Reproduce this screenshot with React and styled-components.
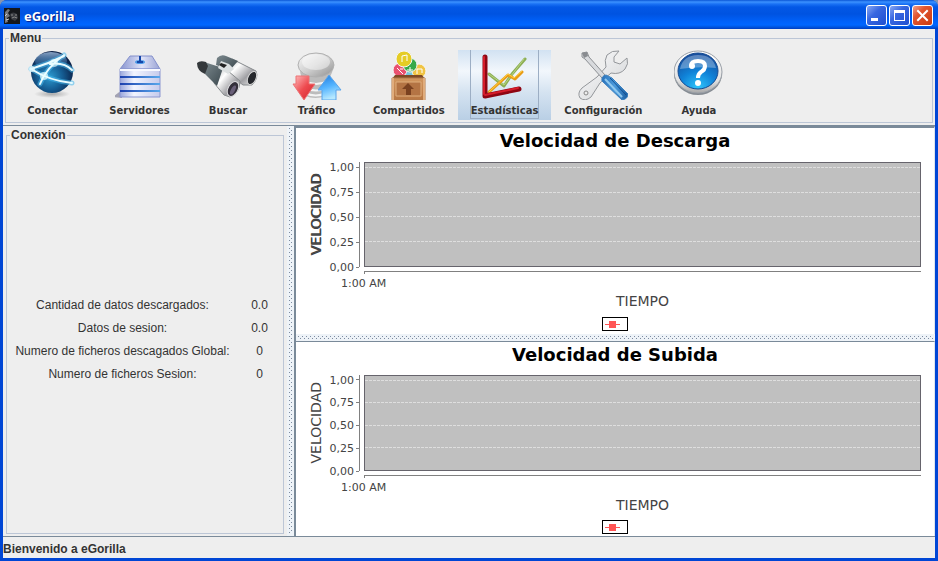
import React from "react";
import styled, { createGlobalStyle, css } from "styled-components";

const GlobalStyle = createGlobalStyle`
  *, *::before, *::after { box-sizing: border-box; }
  html, body { margin: 0; background: #8795b0; }
  body { font-family: "Liberation Sans", Arial, sans-serif; color: #333333; }
`;

const tahoma = `"DejaVu Sans", Tahoma, sans-serif`;

const Window = styled.div`
  display: flex;
  flex-direction: column;
  min-height: 100vh;
  padding: 0 3px 3px;
  background: #0046d5;
  border-radius: 7px 7px 0 0;
  overflow: hidden;
`;

const TitleBar = styled.header`
  display: flex;
  align-items: center;
  gap: 4px;
  height: 29px;
  flex: none;
  margin: 0 -3px;
  padding: 2px 5px 0 4px;
  background: linear-gradient(
    #0a56d6 0, #3c92ff 2px, #1a72f5 4px, #0358e6 7px,
    #0053e1 14px, #0062fb 22px, #0066ff 25px, #0055e0 27px, #003dc0 29px
  );
`;

const WindowTitle = styled.h1`
  flex: 1;
  margin: 0;
  font: bold 13px/18px "Noto Sans", sans-serif;
  color: #ffffff;
  text-shadow: 1px 1px 1px #0a1883;
`;

const WindowButtons = styled.div`
  display: flex;
  gap: 2px;
`;

const WindowButton = styled.button`
  width: 21px;
  height: 21px;
  padding: 0;
  border: 1px solid #ffffff;
  border-radius: 3px;
  background: ${(p) =>
    p.$danger
      ? "linear-gradient(135deg, #f0a08a, #e2552f 35%, #c93a10)"
      : "linear-gradient(135deg, #88a8f4, #3867e0 40%, #1f4fd0)"};
  svg { display: block; }
`;

const Content = styled.div`
  display: flex;
  flex-direction: column;
  flex: 1;
  background: #eeeeee;
`;

const groupTitle = css`
  padding: 0 1px;
  font: bold 12px/14px "Liberation Sans", Arial, sans-serif;
  color: #333333;
`;

const Group = styled.fieldset`
  min-width: 0;
  margin: 0;
  padding: 0;
  border: 1px solid #bcc6d6;
`;

const MenuGroup = styled(Group)`
  margin: 2px;
`;

const GroupTitle = styled.legend`
  margin-left: 3px;
  ${groupTitle}
`;

const ToolBar = styled.nav`
  display: flex;
  padding: 5px 2px 2px 3px;
`;

const ToolButton = styled.button`
  display: flex;
  flex-direction: column;
  align-items: center;
  min-width: 87px;
  height: 70px;
  padding: 0;
  border: 0;
  background: ${(p) =>
    p.$active ? "linear-gradient(#d2e2f2, #f2f7fc 30%, #d5e3f1 60%, #b9cfe5)" : "none"};
  font: bold 10px/14px ${tahoma};
  color: #333333;
`;

const ToolFace = styled.span`
  display: flex;
  flex-direction: column;
  align-items: center;
  gap: 4px;
  height: 69px;
  margin: 0 12px;
  border: solid ${(p) => (p.$active ? "#9caec4" : "transparent")};
  border-width: 0 1px 1px;
  svg { display: block; flex: none; }
`;

const Split = styled.main`
  display: grid;
  grid-template-columns: minmax(284px, 31fr) 7px minmax(0, 70fr);
  flex: 1;
  border-top: 1px solid #7a8a99;
`;

const Divider = styled.div`
  padding: 2px;
  background-color: #eef3f8;
  background-image: conic-gradient(at 1px 1px, transparent 75%, #7d8ba0 0),
    conic-gradient(at 1px 1px, transparent 75%, #7d8ba0 0),
    linear-gradient(#eef3f8, #eef3f8);
  background-size: 4px 4px, 4px 4px, auto;
  background-position: 0 0, 2px 2px, 0 0;
  background-origin: content-box;
  background-clip: content-box, content-box, border-box;
`;

const SidePanel = styled.section`
  display: flex;
  padding: 2px 3px;
`;

const SideGroup = styled(Group)`
  flex: 1;
`;

const Stats = styled.dl`
  display: grid;
  grid-template-columns: 223px 17px;
  grid-auto-rows: 23px;
  column-gap: 17px;
  align-content: center;
  height: 100%;
  margin: 0;
  padding: 4px 4px 0;
  font-size: 12px;
  line-height: 23px;
  white-space: nowrap;
  dt, dd { display: flex; justify-content: center; margin: 0; }
`;

const ChartColumn = styled.div`
  display: grid;
  grid-template-rows: minmax(0, 16fr) 7px minmax(0, 15fr);
  min-width: 0;
  border-left: 2px solid #7a8a99;
  background: #ffffff;
`;

const ChartPanel = styled.section`
  display: flex;
  flex-direction: column;
  min-height: 0;
  border-top: ${(p) => (p.$compact ? 1 : 2)}px solid #7a8a99;
  border-right: 1px solid #dfe6ee;
`;

const ChartTitle = styled.h2`
  margin: 0 0 ${(p) => (p.$compact ? 7 : 8)}px;
  font: bold 18px/26px ${tahoma};
  color: #000000;
  text-align: center;
`;

const ChartGrid = styled.div`
  flex: 1;
  display: grid;
  grid-template-columns: 18px 34px minmax(0, 1fr);
  grid-template-rows: minmax(0, 1fr) 5px 20px 18px;
  min-height: 0;
  padding: 0 13px 0 11px;
  font-family: ${tahoma};
  color: #444444;
`;

const RangeLabel = styled.div`
  align-self: center;
  justify-self: center;
  writing-mode: vertical-rl;
  rotate: 180deg;
  font-size: 14px;
  line-height: 18px;
  text-shadow: ${(p) => (p.$strong ? "1px 0 0 #444444" : "none")};
`;

const Axis = styled.svg`
  display: block;
  contain: size;
  width: 100%;
  height: 100%;
  overflow: visible;
  text { font: 11px ${tahoma}; fill: #444444; text-anchor: end; }
  line { stroke: #808080; shape-rendering: crispEdges; }
`;

const PlotCell = styled.div`
  margin-left: 5px;
  min-height: 0;
  border: 1px solid #66646c;
  background: #c0c0c0;
`;

const Plot = styled(Axis)`
  line { stroke: #dedede; stroke-dasharray: 3 1; }
`;

const DomainLine = styled.div`
  grid-column: 3;
  height: 3px;
  margin: 4px 0 0 5px;
  border-top: 1px solid #808080;
  border-left: 1px solid #808080;
`;

const DomainTick = styled.div`
  grid-column: 2 / 4;
  padding: 5px 0 0 16px;
  font-size: 11px;
  line-height: 14px;
`;

const DomainLabel = styled.div`
  grid-column: 3;
  padding-left: 5px;
  font-size: 14px;
  line-height: 18px;
  text-align: center;
`;

const Legend = styled.div`
  align-self: center;
  width: 26px;
  height: 14px;
  margin: ${(p) => (p.$compact ? "6px 0 2px" : "7px 0 3px")};
  border: 1px solid #000000;
  svg { display: block; }
`;

const StatusBar = styled.footer`
  height: 22px;
  border-top: 1px solid #7a8a99;
  ${groupTitle}
  padding: 5px 0 0;
`;

const icon = { width: 50, height: 50, viewBox: "0 0 50 50", "aria-hidden": true };

const ConnectIcon = () => (
  <svg {...icon}>
    <defs>
      <radialGradient id="globe" cx=".45" cy=".62" r=".6">
        <stop offset="0" stopColor="#2c9ad0" />
        <stop offset=".5" stopColor="#155d93" />
        <stop offset="1" stopColor="#0a1f45" />
      </radialGradient>
      <linearGradient id="globeTop" x2="0" y2="1">
        <stop offset="0" stopColor="#a9c4e4" stopOpacity=".8" />
        <stop offset="1" stopColor="#2a6cb0" stopOpacity="0" />
      </linearGradient>
      <radialGradient id="soft">
        <stop stopColor="#666" stopOpacity=".5" />
        <stop offset="1" stopColor="#666" stopOpacity="0" />
      </radialGradient>
    </defs>
    <ellipse cx="24" cy="44" rx="18" ry="4" fill="url(#soft)" />
    <circle cx="24" cy="22" r="21" fill="url(#globe)" />
    <ellipse cx="23" cy="11" rx="16" ry="9" fill="url(#globeTop)" />
    <g fill="none" strokeLinecap="round">
      <g stroke="#49b9ee" strokeWidth="5" opacity=".55">
        <path d="M3 19Q20 14 36 6M3 19Q22 31 44 33M36 5Q18 18 12 34M22 14Q36 12 44 20" />
      </g>
      <path stroke="#e8fbff" strokeWidth="2" d="M3 19Q20 14 36 6M3 19Q22 31 44 33M36 5Q18 18 12 34M22 14Q36 12 44 20" />
    </g>
    <circle cx="4" cy="19" r="3" fill="#dff8ff" opacity=".8" />
    <circle cx="16" cy="26" r="4" fill="#eaffff" opacity=".7" />
    <circle cx="26" cy="13" r="4" fill="#eaffff" opacity=".6" />
  </svg>
);

const ServersIcon = () => (
  <svg {...icon}>
    <defs>
      <linearGradient id="rack" x2="1" y2="0">
        <stop stopColor="#9aa6dc" />
        <stop offset=".35" stopColor="#f2f4ff" />
        <stop offset="1" stopColor="#c5cbec" />
      </linearGradient>
      <linearGradient id="rackTop" x2="1" y2="0">
        <stop stopColor="#8894d0" />
        <stop offset=".55" stopColor="#dfe3f8" />
        <stop offset="1" stopColor="#9aa3d4" />
      </linearGradient>
      <linearGradient id="rackBand" x2="1" y2="0">
        <stop stopColor="#1c3fae" />
        <stop offset="1" stopColor="#58a8ec" />
      </linearGradient>
    </defs>
    <path d="M-2 47Q3 42 7 41V48Z" fill="#81819a" opacity=".7" />
    <path d="M15 6H37L45 19H5Z" fill="url(#rackTop)" stroke="#8490cc" />
    <path d="M5 19H45V47H5Z" fill="url(#rack)" stroke="#8b96d0" />
    <path d="M5 20H45" stroke="#f8f9ff" strokeWidth="2" />
    <path d="M5 26H45V28H5ZM5 33H45V35H5ZM5 40H45V42H5Z" fill="url(#rackBand)" />
    <ellipse cx="25" cy="12" rx="5" ry="2" fill="#4c9be8" />
    <path d="M25 6V12M22 12H28" stroke="#1646a8" strokeWidth="2" />
  </svg>
);

const SearchIcon = () => (
  <svg {...icon} width="64" viewBox="0 0 64 50">
    <defs>
      <linearGradient id="tube" x2="1" y2=".9">
        <stop stopColor="#a8adb0" />
        <stop offset=".35" stopColor="#ffffff" />
        <stop offset=".7" stopColor="#a0a0a4" />
        <stop offset="1" stopColor="#e8e8e8" />
      </linearGradient>
      <linearGradient id="rubber" x2="1" y2="1">
        <stop stopColor="#7c898e" />
        <stop offset="1" stopColor="#3a474d" />
      </linearGradient>
    </defs>
    <path d="M36 9L60 21Q63 28 56 35L47 35L30 22Z" fill="url(#tube)" stroke="#85898c" />
    <path d="M21 8Q25 4 30 6L42 11L34 20L20 15Z" fill="url(#rubber)" />
    <ellipse cx="56" cy="28" rx="4" ry="7" transform="rotate(25 56 28)" fill="#26282d" stroke="#d8d8d8" />
    <path d="M22 18L32 21L44 31Q44 43 34 47L28 45L18 33Z" fill="url(#tube)" stroke="#888c8e" />
    <path d="M8 12L27 18L21 36L9 24Z" fill="url(#rubber)" />
    <path d="M1 13Q4 10 10 12L12 16L9 24Q1 21 1 13Z" fill="#34383b" />
    <path d="M25 11L33 14L38 19L32 24L22 18Z" fill="#dce0e1" />
    <path d="M25 13L31 15L28 18L23 15Z" fill="#222222" />
    <ellipse cx="37" cy="39" rx="5" ry="8" transform="rotate(28 37 39)" fill="#34303b" stroke="#dedee0" />
    <ellipse cx="37" cy="40" rx="2" ry="5" transform="rotate(28 37 40)" fill="#695f78" />
  </svg>
);

const TrafficIcon = () => (
  <svg {...icon}>
    <defs>
      <linearGradient id="disk" x2="1" y2="1">
        <stop stopColor="#fafafa" />
        <stop offset=".5" stopColor="#cfcfcf" />
        <stop offset="1" stopColor="#8f8f8f" />
      </linearGradient>
      <linearGradient id="redArrow" x2="1" y2="1">
        <stop stopColor="#ffc0c0" />
        <stop offset=".5" stopColor="#ee4b50" />
        <stop offset="1" stopColor="#cf2028" />
      </linearGradient>
      <linearGradient id="blueArrow" x2=".3" y2="1">
        <stop stopColor="#1d78dc" />
        <stop offset=".55" stopColor="#54b4ff" />
        <stop offset="1" stopColor="#b6e8ff" />
      </linearGradient>
    </defs>
    <path d="M8 18Q8 28 13 32V46Q24 50 33 46V32Q40 27 41 18Z" fill="#bcbcbc" />
    <path d="M12 31Q24 37 36 31M13 38Q24 43 35 38M13 43Q24 48 34 43" fill="none" stroke="#f4f4f4" strokeWidth="2" />
    <ellipse cx="24" cy="15" rx="18" ry="12" fill="url(#disk)" stroke="#b0b0b0" />
    <ellipse cx="24" cy="12" rx="14" ry="8" fill="#ffffff" opacity=".45" />
    <path d="M4 26H17V34H23L12 50L1 34H4Z" fill="url(#redArrow)" stroke="#ec7375" />
    <path d="M37 25L49 40H44V50H30V40H26Z" fill="url(#blueArrow)" stroke="#5ba4ea" />
  </svg>
);

const SharedIcon = () => (
  <svg {...icon}>
    <defs>
      <linearGradient id="crate" x2="0" y2="1">
        <stop stopColor="#d2965f" />
        <stop offset="1" stopColor="#b77643" />
      </linearGradient>
    </defs>
    <g stroke="#f6f6f6">
      <circle cx="25" cy="23" r="6" fill="#72c5de" />
      <circle cx="16" cy="20" r="7" fill="#e9526f" />
      <circle cx="35" cy="21" r="7" fill="#f0c444" />
      <circle cx="26" cy="15" r="7" fill="#36a94a" />
      <circle cx="20" cy="9" r="8" fill="#e5cc25" />
    </g>
    <path
      d="M18 12V6L23 5V11M13 18L19 24M16 19H19M26 17V21M23 20H29M33 24V19H38V23"
      fill="none" stroke="#ffffff"
    />
    <path d="M11 25H38L41 29H8Z" fill="#7f4a25" />
    <path d="M8 28H41V50H8Z" fill="url(#crate)" stroke="#b07a4c" />
    <path d="M12 32H37V46H12Z" fill="#b47444" stroke="#dfae7c" />
    <path d="M24 33L30 39H27V45H22V39H18Z" fill="#7a4120" />
    <path d="M9 28V50M40 28V50" stroke="#e0ad7d" strokeWidth="2" />
  </svg>
);

const StatsIcon = () => (
  <svg {...icon}>
    <g fill="none" strokeLinecap="round" strokeLinejoin="round">
      <path d="M9 24L24 36L32 24L45 9" stroke="#8cae55" strokeWidth="3" />
      <path d="M9 24L24 35L44 9" stroke="#b8d580" />
      <path d="M9 42L28 25L35 29L42 22" stroke="#e89b16" strokeWidth="3" />
      <path d="M9 42L28 24L34 28L42 21" stroke="#ffd240" />
      <path d="M5 7V46L39 39" stroke="#8e0613" strokeWidth="5" />
      <path d="M4 7V44M5 45L38 38" stroke="#d51c2b" strokeWidth="2" />
    </g>
  </svg>
);

const SettingsIcon = () => (
  <svg {...icon}>
    <defs>
      <linearGradient id="steel" x2="1" y2="1">
        <stop stopColor="#ffffff" />
        <stop offset="1" stopColor="#cfd1d4" />
      </linearGradient>
      <linearGradient id="handle" x2="1" y2="0">
        <stop stopColor="#2a72bb" />
        <stop offset=".5" stopColor="#4c9bdc" />
        <stop offset="1" stopColor="#185b9e" />
      </linearGradient>
    </defs>
    <path
      d="M41 1Q34 0 29 5Q26 10 28 17L19 27L4 38Q-1 43 2 48Q7 52 13 47L22 33L33 23Q42 25 47 19Q51 14 49 8L42 14L36 12L36 7Z"
      fill="url(#steel)" stroke="#94979b"
    />
    <circle cx="8" cy="43" r="2" fill="#ededed" stroke="#888888" />
    <path d="M4 3L9 2L11 7L27 25L24 28L7 9L4 7Z" fill="#d8dadd" stroke="#8d9094" />
    <path d="M4 3L9 2L10 6L6 8Z" fill="#898c90" />
    <path d="M24 31Q23 26 28 25L34 28L50 44Q50 49 44 50Z" fill="url(#handle)" stroke="#3b7fbd" />
    <path d="M27 29L44 47" stroke="#8fc8ee" strokeWidth="2" />
    <path d="M32 28L48 45" stroke="#124f91" />
  </svg>
);

const HelpIcon = () => (
  <svg {...icon}>
    <defs>
      <radialGradient id="helpBlue" cx=".5" cy=".95" r=".9">
        <stop stopColor="#2fc4fa" />
        <stop offset=".5" stopColor="#0f82d8" />
        <stop offset="1" stopColor="#164f9f" />
      </radialGradient>
      <linearGradient id="rim" x2="0" y2="1">
        <stop stopColor="#ffffff" />
        <stop offset=".7" stopColor="#e2e2e2" />
        <stop offset="1" stopColor="#a8a8a8" />
      </linearGradient>
    </defs>
    <ellipse cx="24" cy="24" rx="24" ry="21" fill="#858b92" />
    <ellipse cx="24" cy="22" rx="24" ry="21" fill="url(#rim)" stroke="#9aa0a8" />
    <ellipse cx="24" cy="21" rx="20" ry="18" fill="url(#helpBlue)" stroke="#164a91" />
    <path d="M6 19Q9 5 24 5T42 18Q24 16 6 19Z" fill="#ffffff" opacity=".3" />
    <path d="M17 16Q17 11 24 11Q31 11 31 16Q31 20 27 22Q24 24 24 28" fill="none" stroke="#ffffff" strokeWidth="4" />
    <circle cx="18" cy="16" r="3" fill="#ffffff" />
    <circle cx="24" cy="33" r="3" fill="#ffffff" />
  </svg>
);

const TOOLS = [
  ["Conectar", ConnectIcon],
  ["Servidores", ServersIcon],
  ["Buscar", SearchIcon],
  ["Tráfico", TrafficIcon],
  ["Compartidos", SharedIcon],
  ["Estadísticas", StatsIcon],
  ["Configuración", SettingsIcon],
  ["Ayuda", HelpIcon],
];

const STATS = [
  ["Cantidad de datos descargados:", "0.0"],
  ["Datos de sesion:", "0.0"],
  ["Numero de ficheros descagados Global:", "0"],
  ["Numero de ficheros Sesion:", "0"],
];

const TICKS = ["1,00", "0,75", "0,50", "0,25", "0,00"].map((label, i) => ({
  label,
  y: `${((0.05 + i * 0.25) / 1.05) * 100}%`,
}));

function Chart({ title, strong, compact }) {
  return (
    <ChartPanel $compact={compact}>
      <ChartTitle $compact={compact}>{title}</ChartTitle>
      <ChartGrid>
        <RangeLabel $strong={strong}>VELOCIDAD</RangeLabel>
        <Axis role="img" aria-label="Escala de velocidad">
          <line x1="34" x2="34" y1="0" y2="100%" />
          {TICKS.map((t) => (
            <React.Fragment key={t.label}>
              <line x1="31" x2="34" y1={t.y} y2={t.y} />
              <text x="29" y={t.y} dy="4">{t.label}</text>
            </React.Fragment>
          ))}
        </Axis>
        <PlotCell>
          <Plot aria-hidden="true">
            {TICKS.slice(0, 4).map((t) => (
              <line key={t.label} x1="0" x2="100%" y1={t.y} y2={t.y} />
            ))}
          </Plot>
        </PlotCell>
        <DomainLine />
        <DomainTick>1:00 AM</DomainTick>
        <DomainLabel>TIEMPO</DomainLabel>
      </ChartGrid>
      <Legend $compact={compact}>
        <svg width="24" height="12" aria-hidden="true">
          <path d="M2 6H17V7H2Z" fill="#ff5555" />
          <path d="M6 3H13V10H6Z" fill="#ff5555" />
        </svg>
      </Legend>
    </ChartPanel>
  );
}

export default function App() {
  return (
    <>
      <GlobalStyle />
      <Window>
        <TitleBar>
          <svg width="16" height="16" viewBox="0 0 16 16" aria-hidden="true">
            <rect width="16" height="16" fill="#15171b" />
            <path d="M1 4L4 1L6 2L4 5L6 8L3 10L4 14L1 15Z" fill="#77797e" />
            <path d="M6 6Q9 3 13 6L14 10L11 13L7 11Z" fill="#393b41" />
            <path d="M7 7H9M11 7H13M8 10Q10 8 13 10" stroke="#8a8a8a" fill="none" />
            <path d="M1 8L3 6M2 12L5 11" stroke="#d0d0d0" />
          </svg>
          <WindowTitle>eGorilla</WindowTitle>
          <WindowButtons>
            <WindowButton aria-label="Minimizar">
              <svg width="19" height="19" aria-hidden="true">
                <path d="M4 12H11V15H4Z" fill="#ffffff" />
              </svg>
            </WindowButton>
            <WindowButton aria-label="Maximizar">
              <svg width="19" height="19" aria-hidden="true">
                <path d="M4 4H15V15H4ZM5 7V14H14V7Z" fill="#ffffff" fillRule="evenodd" />
              </svg>
            </WindowButton>
            <WindowButton $danger aria-label="Cerrar">
              <svg width="19" height="19" aria-hidden="true">
                <path d="M5 5L14 14M14 5L5 14" stroke="#ffffff" strokeWidth="2" strokeLinecap="square" />
              </svg>
            </WindowButton>
          </WindowButtons>
        </TitleBar>
        <Content>
          <MenuGroup>
            <GroupTitle>Menu</GroupTitle>
            <ToolBar>
              {TOOLS.map(([name, Icon]) => {
                const active = name === "Estadísticas";
                return (
                  <ToolButton key={name} $active={active} aria-pressed={active}>
                    <ToolFace $active={active}>
                      <Icon />
                      {name}
                    </ToolFace>
                  </ToolButton>
                );
              })}
            </ToolBar>
          </MenuGroup>
          <Split>
            <SidePanel>
              <SideGroup>
                <GroupTitle>Conexión</GroupTitle>
                <Stats>
                  {STATS.map(([label, value]) => (
                    <React.Fragment key={label}>
                      <dt>{label}</dt>
                      <dd>{value}</dd>
                    </React.Fragment>
                  ))}
                </Stats>
              </SideGroup>
            </SidePanel>
            <Divider />
            <ChartColumn>
              <Chart title="Velocidad de Descarga" strong />
              <Divider />
              <Chart title="Velocidad de Subida" compact />
            </ChartColumn>
          </Split>
          <StatusBar>Bienvenido a eGorilla</StatusBar>
        </Content>
      </Window>
    </>
  );
}
